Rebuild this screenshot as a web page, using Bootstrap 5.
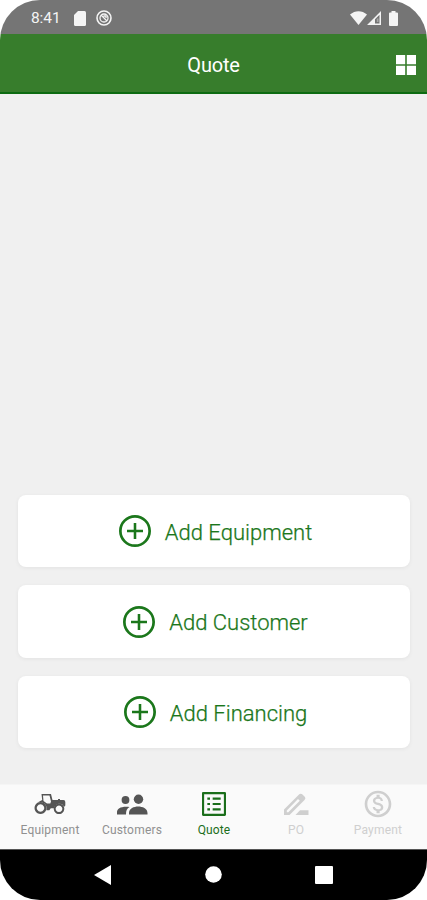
<!DOCTYPE html>
<html lang="en">
<head>
<meta charset="utf-8">
<meta name="viewport" content="width=device-width, initial-scale=1">
<title>Quote</title>
<link href="https://cdn.jsdelivr.net/npm/bootstrap@5.3.0/dist/css/bootstrap.min.css" rel="stylesheet">
<style>
body{background:#fff;font-family:Roboto,"Liberation Sans",sans-serif;overflow:hidden}
svg{display:block;flex:none;fill:currentColor}
.phone{height:900px;border-radius:40px;background:#f0f0f0}
.statusbar{height:34px;background:#757575;color:#f4f4f4;font-size:15.5px;padding:2px 29px 0 31px}
.clock{padding-top:2px;width:43px;letter-spacing:-.1px}
.sdcard{margin-right:10px}
.battery{margin-left:8px}
.titlebar{height:60px;background:#377d2c;border-bottom:2px solid #0d6b12;color:#fff}
.titlebar h1{font-size:20px;font-weight:400;letter-spacing:-.2px}
.title-side{width:31px}
.actions{padding:0 17px 36px 18px;gap:18px}
.action{height:72.5px;border-radius:8px;color:#1b771b;font-size:22px;gap:14px;padding:0 0 0 3px;box-shadow:0 1px 4px rgba(0,0,0,.06)}
.action:hover{color:#1b771b}
.action svg{margin-top:1px}
.action span{font-weight:300;letter-spacing:0;padding-top:3px;-webkit-text-stroke:.25px currentColor}
.tabs{height:65px;background:#fafafa;padding:0 8px 0 9px;border-top:1px solid #f5f5f5}
.tab{width:82px;color:#555;font-size:12px;line-height:14px;padding-top:3px}
.tab span{color:#909090;letter-spacing:.2px;margin-top:3px}
.tab.current,.tab.current span{color:#1b6e1b}
.tab.current span{letter-spacing:.1px}
.tab.off,.tab.off span{color:#cfcfcf}
.sysbar{height:51px;background:#000;color:#fff;border-top:1px solid #555;padding:0 94px 1px 94px}
</style>
</head>
<body>
<div class="phone d-flex flex-column overflow-hidden">
  <div class="statusbar d-flex align-items-center">
    <span class="clock">8:41</span>
    <svg class="sdcard" width="12" height="15" viewBox="0 0 12 15"><path d="M4 0h6.500a1.500 1.500 0 0 1 1.500 1.500v12a1.500 1.500 0 0 1-1.500 1.500h-9A1.500 1.500 0 0 1 0 13.500V4z"/></svg>
    <svg width="16" height="16" viewBox="0 0 16 16" stroke="currentColor"><circle cx="8" cy="8" r="7" fill="none" stroke-width="1.600"/><circle cx="8" cy="8" r="4" fill="none" stroke-width="1.300"/><path d="M5 5l6 6M7.500 6h2.500v2" fill="none" stroke-width="1.300"/></svg>
    <svg class="ms-auto" width="17" height="14" viewBox="0 0 17 14"><path d="M8.500 14L0 3.500C5-1 12-1 17 3.500z"/></svg>
    <svg width="14" height="14" viewBox="0 0 14 14"><path fill-rule="evenodd" d="M0 14L14 0v14zM8 12.600h4.500V3.700L8 8.200z"/><path d="M9.800 7.500h1.700V11H9.800z" opacity=".4"/></svg>
    <svg class="battery" width="9" height="15" viewBox="0 0 9 15"><path d="M2.500 1.500V0h4v1.500H8a1 1 0 0 1 1 1V14a1 1 0 0 1-1 1H1a1 1 0 0 1-1-1V2.500a1 1 0 0 1 1-1z"/></svg>
  </div>
  <header class="titlebar d-flex align-items-center justify-content-between">
    <div class="title-side"></div>
    <h1 class="m-0 pt-1">Quote</h1>
    <div class="title-side pt-1"><svg width="20" height="20" viewBox="0 0 20 20"><path d="M0 0h9.200v9.200H0zM10.800 0H20v9.200h-9.200zM0 10.800h9.200V20H0zM10.800 10.800H20V20h-9.200z"/></svg></div>
  </header>
  <main class="actions flex-grow-1 d-flex flex-column justify-content-end">
    <a class="action bg-white d-flex align-items-center justify-content-center text-decoration-none" href="#"><svg width="32" height="32" viewBox="2 2 20 20"><path d="M12.800 7h-1.600v4.200H7v1.600h4.200V17h1.600v-4.200H17v-1.600h-4.200zM12 2C6.480 2 2 6.480 2 12s4.480 10 10 10 10-4.480 10-10S17.520 2 12 2zm0 18.300a8.300 8.300 0 1 1 0-16.600 8.300 8.300 0 0 1 0 16.600z"/></svg><span>Add Equipment</span></a>
    <a class="action bg-white d-flex align-items-center justify-content-center text-decoration-none" href="#"><svg width="32" height="32" viewBox="2 2 20 20"><path d="M12.800 7h-1.600v4.200H7v1.600h4.200V17h1.600v-4.200H17v-1.600h-4.200zM12 2C6.480 2 2 6.480 2 12s4.480 10 10 10 10-4.480 10-10S17.520 2 12 2zm0 18.300a8.300 8.300 0 1 1 0-16.600 8.300 8.300 0 0 1 0 16.600z"/></svg><span>Add Customer</span></a>
    <a class="action bg-white d-flex align-items-center justify-content-center text-decoration-none" href="#"><svg width="32" height="32" viewBox="2 2 20 20"><path d="M12.800 7h-1.600v4.200H7v1.600h4.200V17h1.600v-4.200H17v-1.600h-4.200zM12 2C6.480 2 2 6.480 2 12s4.480 10 10 10 10-4.480 10-10S17.520 2 12 2zm0 18.300a8.300 8.300 0 1 1 0-16.600 8.300 8.300 0 0 1 0 16.600z"/></svg><span>Add Financing</span></a>
  </main>
  <nav class="tabs d-flex">
    <div class="tab d-flex flex-column align-items-center">
      <svg width="32" height="32" viewBox="0 0 32 32"><path fill-rule="evenodd" d="M7.500 6H17l1.500 6H24v-1h2v1h3.500q1.800 0 1.800 2v3.500L30 19a5 5 0 0 0-9.700 1.200h-3.500l-1.500 2h-3A6.500 6.500 0 0 0 3.500 14.500L8.200 12zM9 7.500l.5 5.500 3.500 2.500h3.300L17 13.500l-1.500-6z"/><path fill-rule="evenodd" d="M6.500 14a6 6 0 1 0 .01 0zm0 2.300a3.700 3.700 0 1 1-.01 0zM25 15.500a5.300 5.300 0 1 0 .01 0zm0 2a3.300 3.300 0 1 1-.01 0z"/></svg>
      <span>Equipment</span>
    </div>
    <div class="tab d-flex flex-column align-items-center">
      <svg width="32" height="32" viewBox="0 0 32 32"><circle cx="9.500" cy="12" r="3.900"/><circle cx="22.500" cy="11.300" r="4.700"/><path d="M13.500 19C11 20.500 10 22.500 10 26.500H1V24c0-3.500 4.500-6 12.500-5zM13 26.500V25c0-4.500 5-6.500 9.200-6.500s9.300 2 9.300 6.500v1.500z"/></svg>
      <span>Customers</span>
    </div>
    <div class="tab current d-flex flex-column align-items-center">
      <svg width="32" height="32" viewBox="0 0 24 24"><path d="M19.400 4.600v14.800H4.600V4.600h14.800M20.100 3H3.900c-.5 0-.9.400-.9.900v16.200c0 .4.400.9.900.9h16.200c.4 0 .9-.5.900-.9V3.900c0-.5-.5-.9-.9-.9zM11 7.200h6v1.600h-6zm0 4h6v1.600h-6zm0 4h6v1.600h-6zM7 7.200h2v1.600H7zm0 4h2v1.600H7zm0 4h2v1.600H7z"/></svg>
      <span>Quote</span>
    </div>
    <div class="tab off d-flex flex-column align-items-center">
      <svg width="32" height="32" viewBox="0 0 32 32"><path fill-rule="evenodd" d="M4 27v-5.500L18.500 7q2-2 4-.5L25 9q1 1.500-.5 3L9.500 27zM6.800 24.300h1.500L19.800 12.800 18 11 6.800 22.500z"/><path d="M28.500 27H15.500l4.500-4.800h8.500z"/></svg>
      <span>PO</span>
    </div>
    <div class="tab off d-flex flex-column align-items-center">
      <svg width="32" height="32" viewBox="0 0 24 24"><path d="M12 2C6.480 2 2 6.480 2 12s4.480 10 10 10 10-4.480 10-10S17.520 2 12 2zm0 18c-4.410 0-8-3.590-8-8s3.590-8 8-8 8 3.590 8 8-3.590 8-8 8zm.31-8.860c-1.770-.45-2.340-.94-2.340-1.670 0-.84.790-1.430 2.100-1.430 1.380 0 1.900.66 1.940 1.640h1.710c-.05-1.340-.87-2.570-2.490-2.970V5H10.900v1.690c-1.510.32-2.720 1.300-2.720 2.810 0 1.790 1.490 2.690 3.660 3.210 1.950.46 2.340 1.150 2.340 1.870 0 .53-.39 1.390-2.100 1.390-1.600 0-2.230-.72-2.320-1.640H8.040c.1 1.700 1.360 2.660 2.860 2.970V19h2.340v-1.670c1.520-.29 2.720-1.160 2.730-2.770-.01-2.200-1.900-2.960-3.660-3.420z"/></svg>
      <span>Payment</span>
    </div>
  </nav>
  <div class="sysbar d-flex align-items-center justify-content-between">
    <svg width="18" height="20" viewBox="0 0 18 20"><path d="M17 0v20L0 10z"/></svg>
    <svg width="17" height="17" viewBox="0 0 17 17"><circle cx="8.500" cy="8.500" r="8.300"/></svg>
    <svg width="18" height="18" viewBox="0 0 18 18"><rect width="18" height="18" rx="1"/></svg>
  </div>
</div>
<script src="https://cdn.jsdelivr.net/npm/bootstrap@5.3.0/dist/js/bootstrap.bundle.min.js"></script>
</body>
</html>
